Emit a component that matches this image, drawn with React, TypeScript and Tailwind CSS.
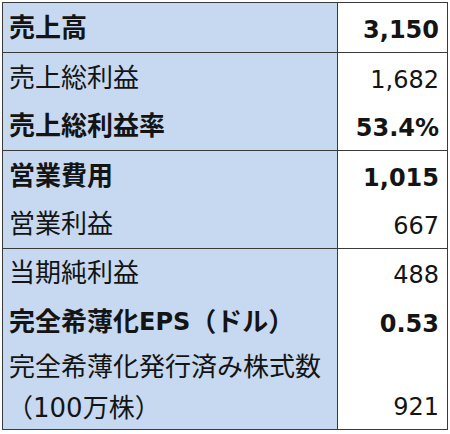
const font = { fontFamily: "'DejaVu Sans', 'Noto Sans CJK JP', sans-serif" };

type Row = { label: React.ReactNode; value: string; bold?: boolean; h: string };

const groups: Row[][] = [
  [{ label: "売上高", value: "3,150", bold: true, h: "h-[49px]" }],
  [
    { label: "売上総利益", value: "1,682", h: "h-[49px]" },
    { label: "売上総利益率", value: "53.4%", bold: true, h: "h-[48px]" },
  ],
  [
    { label: "営業費用", value: "1,015", bold: true, h: "h-[49px]" },
    { label: "営業利益", value: "667", h: "h-[48px]" },
  ],
  [
    { label: "当期純利益", value: "488", h: "h-[48px]" },
    {
      label: (
        <>
          完全希薄化<span className="text-[24px]">EPS</span>（ドル）
        </>
      ),
      value: "0.53",
      bold: true,
      h: "h-[49px]",
    },
  ],
];

export default function App() {
  return (
    <div className="bg-white w-[450px] h-[434px] pt-[2px] pl-[2px]" style={font}>
      <div className="w-[446px] border border-[#3a3a3a] text-[#141414]">
        {groups.map((rows, gi) => (
          <div
            key={gi}
            className={`grid grid-cols-[335px_1fr] ${gi > 0 ? "border-t border-[#3a3a3a]" : ""}`}
          >
            <div className="bg-[#c6d9f0] border-r border-[#3a3a3a]">
              {rows.map((r, i) => (
                <div
                  key={i}
                  className={`${r.h} flex items-center pl-[6px] text-[26px] leading-none ${r.bold ? "font-bold" : ""}`}
                >
                  {r.label}
                </div>
              ))}
              {gi === 3 && (
                <div className="h-[83px] flex flex-col justify-center pl-[6px] text-[26px] leading-[41px]">
                  <div>完全希薄化発行済み株式数</div>
                  <div className="-ml-[2px]">（100万株）</div>
                </div>
              )}
            </div>
            <div className="bg-white">
              {rows.map((r, i) => (
                <div
                  key={i}
                  className={`${r.h} flex items-center justify-end pr-[8px] pt-[4px] text-[24px] leading-none ${r.bold ? "font-bold" : ""}`}
                >
                  {r.value}
                </div>
              ))}
              {gi === 3 && (
                <div className="h-[83px] flex items-end justify-end pr-[8px] pb-[10px] text-[24px] leading-none">
                  921
                </div>
              )}
            </div>
          </div>
        ))}
      </div>
    </div>
  );
}
